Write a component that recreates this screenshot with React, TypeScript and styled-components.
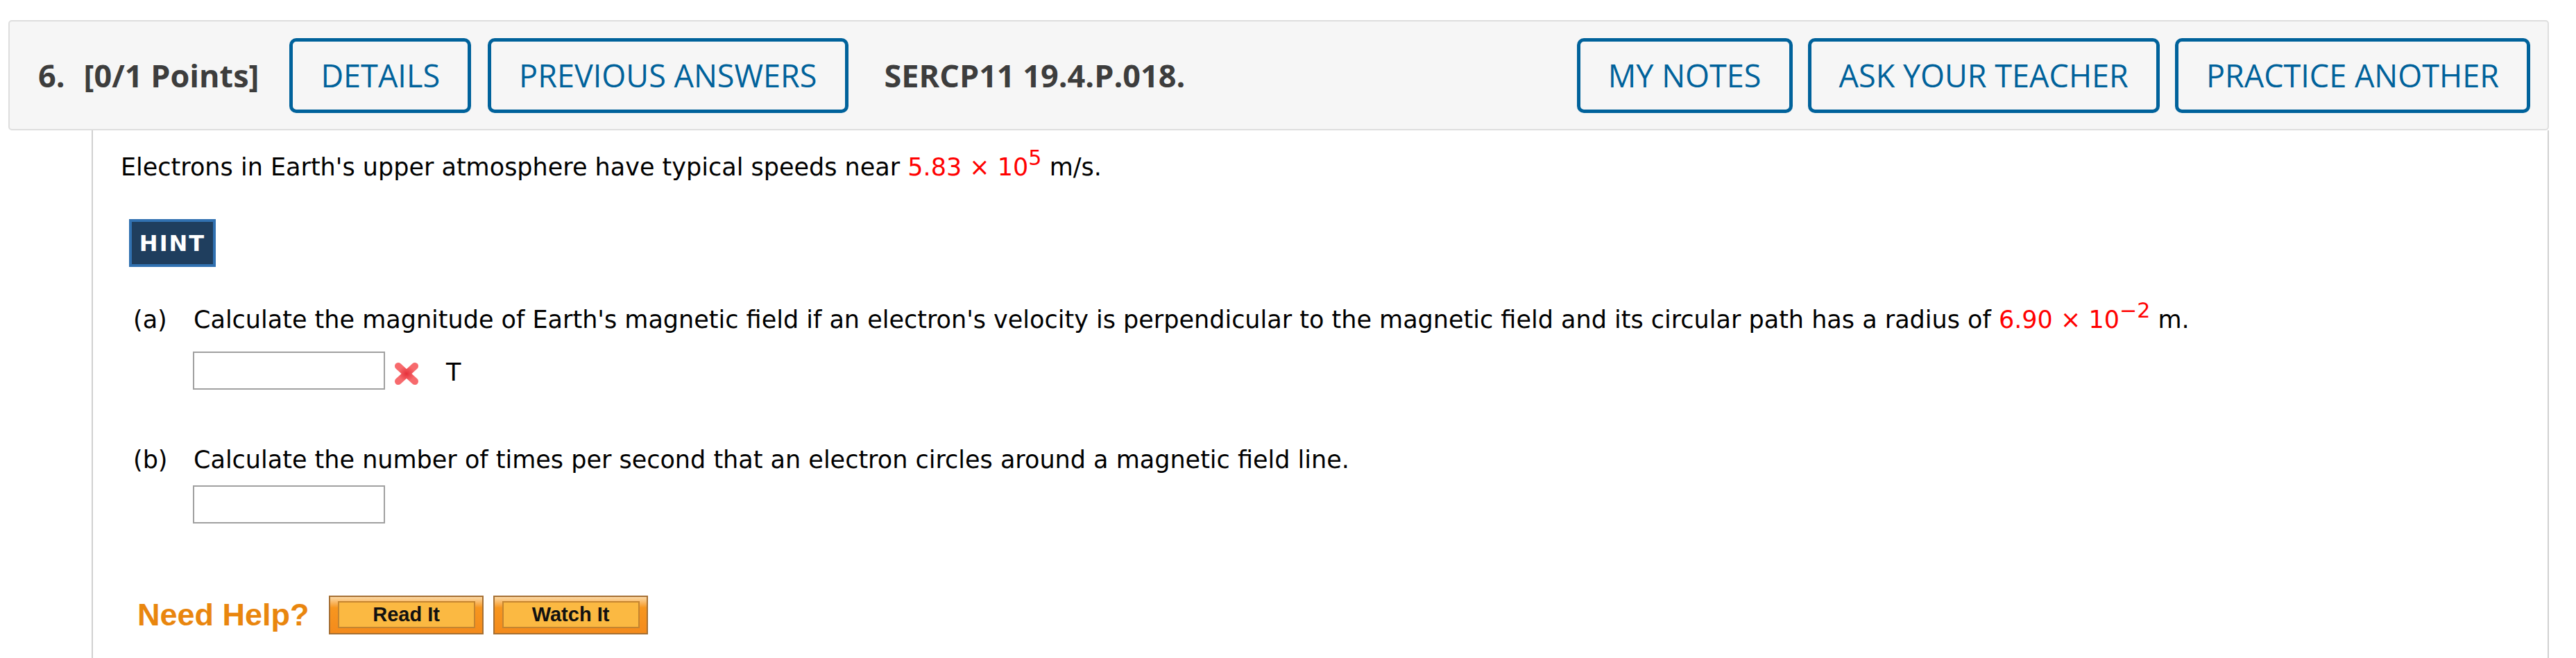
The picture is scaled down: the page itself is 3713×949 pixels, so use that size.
import React from "react";
import styled, { createGlobalStyle } from "styled-components";

const GlobalStyle = createGlobalStyle`
  html, body { margin: 0; padding: 0; background: #ffffff; }
  body { font-family: Verdana, "DejaVu Sans", sans-serif; }
`;

const Page = styled.div`
  padding: 29px 39px 0 12px;
`;

const Header = styled.header`
  display: flex;
  align-items: center;
  height: 159px;
  box-sizing: border-box;
  padding: 0 25px 0 41px;
  background: #f6f6f6;
  border: 2px solid #dedede;
  border-radius: 5px;
  font-family: "Open Sans", sans-serif;
`;

const HeaderText = styled.span<{ $mr?: number; $ml?: number }>`
  font-weight: 700;
  font-size: 45px;
  color: #3d3d3d;
  white-space: nowrap;
  margin-right: ${(p) => p.$mr ?? 0}px;
  margin-left: ${(p) => p.$ml ?? 0}px;
`;

const ButtonGroup = styled.div<{ $gap: number }>`
  display: flex;
  align-items: center;
  gap: ${(p) => p.$gap}px;
`;

const Spacer = styled.div`
  flex: 1;
`;

const ActionButton = styled.button`
  height: 108px;
  box-sizing: border-box;
  padding: 0 40px;
  border: 5px solid #00629b;
  border-radius: 10px;
  background: transparent;
  color: #00629b;
  font-family: "Open Sans", sans-serif;
  font-size: 45px;
  font-weight: 400;
  line-height: 1;
  white-space: nowrap;
`;

const Content = styled.main`
  margin-left: 120px;
  border-left: 2px solid #d0d0d0;
  border-right: 2px solid #d0d0d0;
  padding: 28px 40px 60px 40px;
  font-size: 35px;
  line-height: 50px;
  color: #000;
`;

const Paragraph = styled.p`
  margin: 0;
  white-space: nowrap;
`;

const Red = styled.span`
  color: #ff0000;
`;

const Sup = styled.span`
  font-size: 0.86em;
  vertical-align: 15px;
  line-height: 0;
`;

const HintButton = styled.button`
  display: block;
  margin: 50px 0 0 12px;
  box-sizing: border-box;
  width: 125px;
  height: 69px;
  padding: 0;
  background: #1f3e5e;
  border: 4px solid #3171b1;
  color: #ffffff;
  font-family: Verdana, "DejaVu Sans", sans-serif;
  font-weight: 700;
  font-size: 32px;
  letter-spacing: 2px;
`;

const Part = styled.div<{ $mt: number; $gap: number }>`
  margin-top: ${(p) => p.$mt}px;
  padding-left: 18px;
  display: grid;
  grid-template-columns: 87px 1fr;
  row-gap: ${(p) => p.$gap}px;
`;

const PartLabel = styled.span`
  grid-column: 1;
`;

const PartText = styled.span`
  grid-column: 2;
  white-space: nowrap;
`;

const AnswerRow = styled.div`
  grid-column: 2;
  display: flex;
  align-items: center;
  margin-left: -1px;
`;

const AnswerInput = styled.input`
  box-sizing: border-box;
  width: 277px;
  height: 55px;
  border: 2px solid #a0a0a0;
  background: #fff;
  margin: 0;
`;

const WrongMark = styled.svg`
  margin-left: 12px;
  margin-top: 9px;
`;

const Unit = styled.span`
  margin-left: 38px;
  margin-top: 4px;
`;

const HelpRow = styled.div`
  margin-top: 104px;
  padding-left: 24px;
  display: flex;
  align-items: center;
`;

const NeedHelp = styled.span`
  font-family: "Liberation Sans", Arial, sans-serif;
  font-weight: 700;
  font-size: 45px;
  color: #e9860e;
  margin-right: 28px;
  line-height: 56px;
`;

const HelpButton = styled.button`
  box-sizing: border-box;
  width: 223px;
  height: 56px;
  padding: 6px 10px 7px 11px;
  margin-right: 14px;
  border: 2px solid #a56f33;
  background: linear-gradient(#fcd9a6 0%, #f7961f 30%, #f48b1c 100%);
`;

const HelpLabel = styled.span`
  display: flex;
  align-items: center;
  justify-content: center;
  height: 100%;
  box-sizing: border-box;
  border: 2px solid #c5852f;
  background: #fbb942;
  font-family: "Liberation Sans", Arial, sans-serif;
  font-weight: 700;
  font-size: 29px;
  color: #111;
`;

const XIcon = () => (
  <WrongMark width="38" height="36" viewBox="0 0 38 36">
    <defs>
      <radialGradient id="xg" cx="50%" cy="50%" r="50%">
        <stop offset="0%" stopColor="#e6303a" />
        <stop offset="100%" stopColor="#f76a6d" />
      </radialGradient>
    </defs>
    <g stroke="url(#xg)" strokeWidth="10" strokeLinecap="round">
      <line x1="7" y1="7" x2="31" y2="29" />
      <line x1="31" y1="7" x2="7" y2="29" />
    </g>
  </WrongMark>
);

export default function App() {
  return (
    <>
      <GlobalStyle />
      <Page>
        <Header>
          <HeaderText $mr={27}>6.</HeaderText>
          <HeaderText $mr={44}>[0/1 Points]</HeaderText>
          <ButtonGroup $gap={24}>
            <ActionButton>DETAILS</ActionButton>
            <ActionButton>PREVIOUS ANSWERS</ActionButton>
          </ButtonGroup>
          <HeaderText $ml={52}>SERCP11 19.4.P.018.</HeaderText>
          <Spacer />
          <ButtonGroup $gap={22}>
            <ActionButton>MY NOTES</ActionButton>
            <ActionButton>ASK YOUR TEACHER</ActionButton>
            <ActionButton>PRACTICE ANOTHER</ActionButton>
          </ButtonGroup>
        </Header>
        <Content>
          <Paragraph>
            Electrons in Earth's upper atmosphere have typical speeds near{" "}
            <Red>
              5.83 × 10<Sup>5</Sup>
            </Red>{" "}
            m/s.
          </Paragraph>
          <HintButton>HINT</HintButton>
          <Part $mt={51} $gap={21}>
            <PartLabel>(a)</PartLabel>
            <PartText>
              Calculate the magnitude of Earth's magnetic field if an electron's velocity is
              perpendicular to the magnetic field and its circular path has a radius of{" "}
              <Red>
                6.90 × 10<Sup>−2</Sup>
              </Red>{" "}
              m.
            </PartText>
            <AnswerRow>
              <AnswerInput type="text" />
              <XIcon />
              <Unit>T</Unit>
            </AnswerRow>
          </Part>
          <Part $mt={76} $gap={12}>
            <PartLabel>(b)</PartLabel>
            <PartText>
              Calculate the number of times per second that an electron circles around a
              magnetic field line.
            </PartText>
            <AnswerRow>
              <AnswerInput type="text" />
            </AnswerRow>
          </Part>
          <HelpRow>
            <NeedHelp>Need Help?</NeedHelp>
            <HelpButton>
              <HelpLabel>Read It</HelpLabel>
            </HelpButton>
            <HelpButton>
              <HelpLabel>Watch It</HelpLabel>
            </HelpButton>
          </HelpRow>
        </Content>
      </Page>
    </>
  );
}
